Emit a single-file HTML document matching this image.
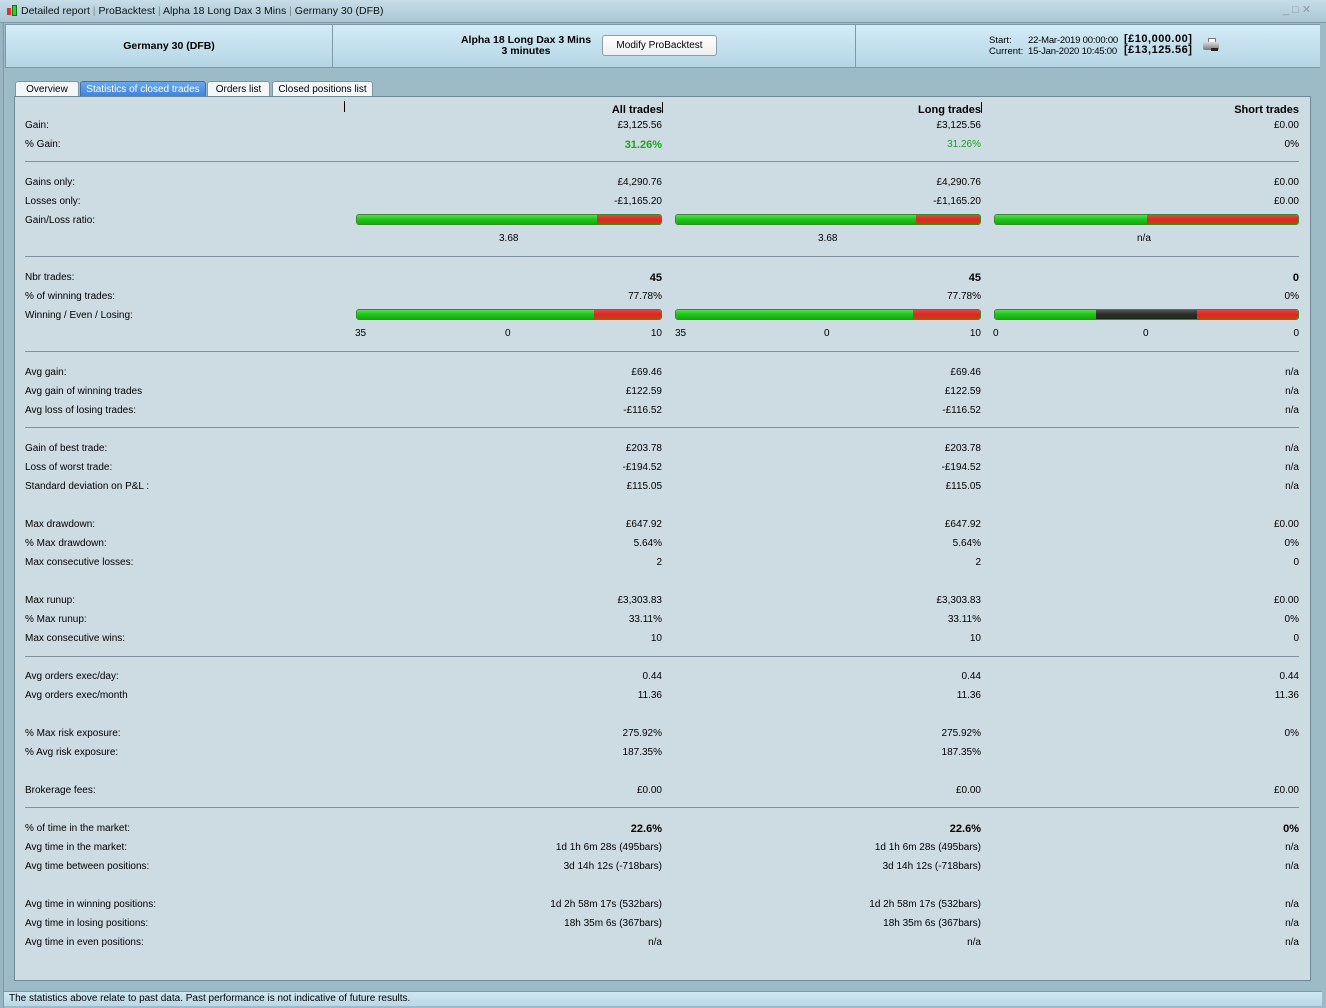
<!DOCTYPE html>
<html><head><meta charset="utf-8">
<style>
*{margin:0;padding:0;box-sizing:border-box}
body{width:1326px;height:1008px;overflow:hidden;background:#9dbac7;font-family:"Liberation Sans",Tahoma,sans-serif;font-size:10px;color:#000;position:relative}
.abs{position:absolute}
#title{left:0;top:0;width:1326px;height:23px;background:linear-gradient(#c7dde7,#a9c6d3);border-bottom:1px solid #7f9aa7}
#title span{position:absolute;top:5px;font-size:10.5px;color:#111}
.hp{position:absolute;top:24px;height:44px;background:linear-gradient(#d3ecf7,#b5d5e3);border-top:1px solid #7f9aa7;border-bottom:1px solid #7f9aa7}
#panel{left:14px;top:96px;width:1297px;height:885px;background:#cddbe2;border:1px solid #6f8896}
.tab{position:absolute;top:81px;height:16px;background:#f4f7f9;border:1px solid #7d96a3;border-bottom:none;border-radius:3px 3px 0 0;font-size:10px;text-align:center;line-height:15px}
.r{position:absolute;left:25px;width:1274px;height:14px;line-height:14px;transform:translateY(2px)}
.r span{position:absolute;white-space:nowrap}
.a{right:637px}.b{right:318px}.c{right:0}
.bd{font-weight:bold;font-size:11px}
.sep{position:absolute;left:25px;width:1274px;height:1px;background:#7d939f}
.bar{position:absolute;height:11px;border-radius:3px;overflow:hidden;border:1px solid #3a8a2a;display:flex}
.g{background:linear-gradient(#4fe04a,#1fc419 50%,#16a812)}
.rd{background:linear-gradient(#ee4040,#d82a20 50%,#b84a10)}
.dk{background:linear-gradient(#555,#2a2a2a 50%,#1c2c14)}
#status{left:4px;top:991px;width:1318px;height:15px;background:linear-gradient(#cfe8f3,#b9d7e5);border-top:1px solid #7f9aa7;padding-left:5px;line-height:14px;font-size:10px}
</style></head><body>
<div id="title" class="abs">
 <div class="abs" style="left:7px;top:8px;width:4px;height:7px;background:#d33"></div>
 <div class="abs" style="left:12px;top:5px;width:5px;height:11px;background:#3c3;border:1px solid #171"></div>
 <span style="left:21px">Detailed report <span style="position:static;color:#888">|</span> ProBacktest <span style="position:static;color:#888">|</span> Alpha 18 Long Dax 3 Mins <span style="position:static;color:#888">|</span> Germany 30 (DFB)</span>
 <span style="left:1283px;top:3px;color:#8a9aa2;font-size:11px">_ □ ✕</span>
</div>
<div class="abs" style="left:0;top:23px;width:4px;height:985px;background:#9ab5c2;border-right:1px solid #7f9aa7"></div>
<div class="hp" style="left:5px;width:327px;border-left:1px solid #7f9aa7"><div style="text-align:center;font-weight:bold;font-size:10.5px;margin-top:15px">Germany 30 (DFB)</div></div>
<div class="hp" style="left:332px;width:523px;border-left:1px solid #7f9aa7">
 <div class="abs" style="left:120px;top:10px;width:146px;text-align:center;font-weight:bold;font-size:10.5px;line-height:11px">Alpha 18 Long Dax 3 Mins<br>3 minutes</div>
 <div class="abs" style="left:269px;top:10px;width:115px;height:21px;background:linear-gradient(#fff,#eceff1);border:1px solid #8f9da5;border-radius:3px;text-align:center;line-height:19px;font-size:10px">Modify ProBacktest</div>
</div>
<div class="hp" style="left:855px;width:465px;border-left:1px solid #7f9aa7">
 <div class="abs" style="left:133px;top:10px;font-size:9.5px;line-height:11px">Start:<br>Current:</div>
 <div class="abs" style="left:172px;top:10px;font-size:9.5px;line-height:11px;letter-spacing:-0.2px">22-Mar-2019 00:00:00<br>15-Jan-2020 10:45:00</div>
 <div class="abs" style="left:268px;top:9px;font-weight:bold;font-size:11px;line-height:11px;letter-spacing:0.5px">[£10,000.00]<br>[£13,125.56]</div>
 <div class="abs" style="left:352px;top:13px;width:8px;height:5px;background:#fff;border:1px solid #777"></div>
 <div class="abs" style="left:347px;top:17px;width:16px;height:8px;background:linear-gradient(#ddd,#777);border-radius:2px"></div>
 <div class="abs" style="left:355px;top:23px;width:7px;height:3px;background:#222"></div>
</div>

<div class="tab" style="left:15px;width:64px">Overview</div>
<div class="tab" style="left:80px;width:126px;background:linear-gradient(#6aa7ea,#3d82d8);color:#fff;border-color:#3b6fae">Statistics of closed trades</div>
<div class="tab" style="left:207px;width:63px">Orders list</div>
<div class="tab" style="left:272px;width:101px">Closed positions list</div>

<div id="panel" class="abs"></div>

<div class="abs" style="left:344px;top:101px;width:1px;height:11px;background:#000"></div>
<div class="r" style="top:101px"><span class="a bd" style="right:637px">All trades</span><span class="b bd">Long trades</span><span class="c bd">Short trades</span></div>
<div class="abs" style="left:662px;top:102px;width:1px;height:11px;background:#000"></div>
<div class="abs" style="left:981px;top:102px;width:1px;height:11px;background:#000"></div>

<div class="r" style="top:117px"><span>Gain:</span><span class="a">£3,125.56</span><span class="b">£3,125.56</span><span class="c">£0.00</span></div>
<div class="r" style="top:136px"><span>% Gain:</span><span class="a bd" style="color:#1aa51a">31.26%</span><span class="b" style="color:#1aa51a">31.26%</span><span class="c">0%</span></div>
<div class="sep" style="top:161px"></div>
<div class="r" style="top:174px"><span>Gains only:</span><span class="a">£4,290.76</span><span class="b">£4,290.76</span><span class="c">£0.00</span></div>
<div class="r" style="top:193px"><span>Losses only:</span><span class="a">-£1,165.20</span><span class="b">-£1,165.20</span><span class="c">£0.00</span></div>
<div class="r" style="top:212px"><span>Gain/Loss ratio:</span></div>
<div class="bar" style="left:356px;top:214px;width:306px"><div class="g" style="width:79%"></div><div class="rd" style="flex:1"></div></div>
<div class="bar" style="left:675px;top:214px;width:306px"><div class="g" style="width:79%"></div><div class="rd" style="flex:1"></div></div>
<div class="bar" style="left:994px;top:214px;width:305px"><div class="g" style="width:50%"></div><div class="rd" style="flex:1"></div></div>
<div class="r" style="top:230px"><span style="left:474px">3.68</span><span style="left:793px">3.68</span><span style="left:1112px">n/a</span></div>
<div class="sep" style="top:256px"></div>
<div class="r" style="top:269px"><span>Nbr trades:</span><span class="a bd">45</span><span class="b bd">45</span><span class="c bd">0</span></div>
<div class="r" style="top:288px"><span>% of winning trades:</span><span class="a">77.78%</span><span class="b">77.78%</span><span class="c">0%</span></div>
<div class="r" style="top:307px"><span>Winning / Even / Losing:</span></div>
<div class="bar" style="left:356px;top:309px;width:306px"><div class="g" style="width:78%"></div><div class="rd" style="flex:1"></div></div>
<div class="bar" style="left:675px;top:309px;width:306px"><div class="g" style="width:78%"></div><div class="rd" style="flex:1"></div></div>
<div class="bar" style="left:994px;top:309px;width:305px"><div class="g" style="width:33.3%"></div><div class="dk" style="width:33.3%"></div><div class="rd" style="flex:1"></div></div>
<div class="r" style="top:325px"><span style="left:330px">35</span><span style="left:480px">0</span><span class="a">10</span><span style="left:650px">35</span><span style="left:799px">0</span><span class="b">10</span><span style="left:968px">0</span><span style="left:1118px">0</span><span class="c">0</span></div>
<div class="sep" style="top:351px"></div>
<div class="r" style="top:364px"><span>Avg gain:</span><span class="a">£69.46</span><span class="b">£69.46</span><span class="c">n/a</span></div>
<div class="r" style="top:383px"><span>Avg gain of winning trades</span><span class="a">£122.59</span><span class="b">£122.59</span><span class="c">n/a</span></div>
<div class="r" style="top:402px"><span>Avg loss of losing trades:</span><span class="a">-£116.52</span><span class="b">-£116.52</span><span class="c">n/a</span></div>
<div class="sep" style="top:427px"></div>
<div class="r" style="top:440px"><span>Gain of best trade:</span><span class="a">£203.78</span><span class="b">£203.78</span><span class="c">n/a</span></div>
<div class="r" style="top:459px"><span>Loss of worst trade:</span><span class="a">-£194.52</span><span class="b">-£194.52</span><span class="c">n/a</span></div>
<div class="r" style="top:478px"><span>Standard deviation on P&amp;L :</span><span class="a">£115.05</span><span class="b">£115.05</span><span class="c">n/a</span></div>
<div class="r" style="top:516px"><span>Max drawdown:</span><span class="a">£647.92</span><span class="b">£647.92</span><span class="c">£0.00</span></div>
<div class="r" style="top:535px"><span>% Max drawdown:</span><span class="a">5.64%</span><span class="b">5.64%</span><span class="c">0%</span></div>
<div class="r" style="top:554px"><span>Max consecutive losses:</span><span class="a">2</span><span class="b">2</span><span class="c">0</span></div>
<div class="r" style="top:592px"><span>Max runup:</span><span class="a">£3,303.83</span><span class="b">£3,303.83</span><span class="c">£0.00</span></div>
<div class="r" style="top:611px"><span>% Max runup:</span><span class="a">33.11%</span><span class="b">33.11%</span><span class="c">0%</span></div>
<div class="r" style="top:630px"><span>Max consecutive wins:</span><span class="a">10</span><span class="b">10</span><span class="c">0</span></div>
<div class="sep" style="top:656px"></div>
<div class="r" style="top:668px"><span>Avg orders exec/day:</span><span class="a">0.44</span><span class="b">0.44</span><span class="c">0.44</span></div>
<div class="r" style="top:687px"><span>Avg orders exec/month</span><span class="a">11.36</span><span class="b">11.36</span><span class="c">11.36</span></div>
<div class="r" style="top:725px"><span>% Max risk exposure:</span><span class="a">275.92%</span><span class="b">275.92%</span><span class="c">0%</span></div>
<div class="r" style="top:744px"><span>% Avg risk exposure:</span><span class="a">187.35%</span><span class="b">187.35%</span></div>
<div class="r" style="top:782px"><span>Brokerage fees:</span><span class="a">£0.00</span><span class="b">£0.00</span><span class="c">£0.00</span></div>
<div class="sep" style="top:807px"></div>
<div class="r" style="top:820px"><span>% of time in the market:</span><span class="a bd">22.6%</span><span class="b bd">22.6%</span><span class="c bd">0%</span></div>
<div class="r" style="top:839px"><span>Avg time in the market:</span><span class="a">1d 1h 6m 28s (495bars)</span><span class="b">1d 1h 6m 28s (495bars)</span><span class="c">n/a</span></div>
<div class="r" style="top:858px"><span>Avg time between positions:</span><span class="a">3d 14h 12s (-718bars)</span><span class="b">3d 14h 12s (-718bars)</span><span class="c">n/a</span></div>
<div class="r" style="top:896px"><span>Avg time in winning positions:</span><span class="a">1d 2h 58m 17s (532bars)</span><span class="b">1d 2h 58m 17s (532bars)</span><span class="c">n/a</span></div>
<div class="r" style="top:915px"><span>Avg time in losing positions:</span><span class="a">18h 35m 6s (367bars)</span><span class="b">18h 35m 6s (367bars)</span><span class="c">n/a</span></div>
<div class="r" style="top:934px"><span>Avg time in even positions:</span><span class="a">n/a</span><span class="b">n/a</span><span class="c">n/a</span></div>

<div id="status" class="abs">The statistics above relate to past data. Past performance is not indicative of future results.</div>
</body></html>
